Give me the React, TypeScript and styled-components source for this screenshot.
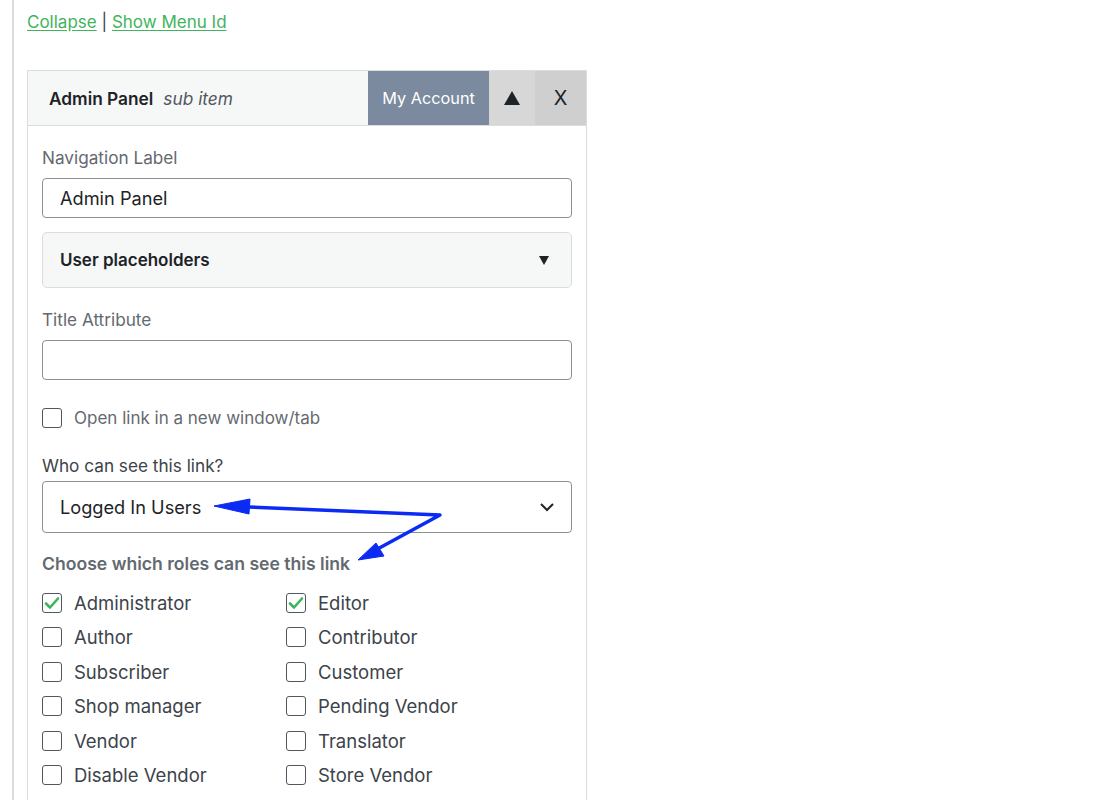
import React from "react";
import styled, { createGlobalStyle } from "styled-components";

const GlobalStyle = createGlobalStyle`
  html, body { margin: 0; padding: 0; background: #fff; }
  body {
    font-family: Inter, "Noto Sans", "Liberation Sans", sans-serif;
    color: #1d2327;
  }
  * { box-sizing: border-box; }
`;

const Page = styled.div`
  margin-left: 12px;
  border-left: 2px solid #dcdcde;
  padding-left: 13px;
  min-height: 800px;
  overflow: hidden;
`;

const LinkBar = styled.div`
  padding-top: 11px;
  height: 70px;
  font-size: 17px;
  color: #3c434a;
  line-height: 22px;
`;

const TextLink = styled.a`
  color: #3fb45c;
  text-decoration: underline;
  text-underline-offset: 2px;
  cursor: pointer;
`;

const Panel = styled.div`
  width: 560px;
  border: 1px solid #dcdcde;
  border-bottom: none;
  min-height: 740px;
  position: relative;
`;

const Header = styled.div`
  display: flex;
  height: 55px;
  background: #f6f7f7;
  border-bottom: 1px solid #dcdcde;
`;

const HeaderTitle = styled.div`
  flex: 1;
  display: flex;
  align-items: center;
  padding-left: 21px;
  gap: 10px;
  font-size: 17.3px;
`;

const TitleStrong = styled.span`
  font-weight: 600;
  color: #1d2327;
`;

const TitleNote = styled.span`
  font-style: italic;
  color: #50575e;
`;

const HeaderButton = styled.div<{ $w: number; $bg: string; $fg: string }>`
  width: ${(p) => p.$w}px;
  background: ${(p) => p.$bg};
  color: ${(p) => p.$fg};
  display: flex;
  align-items: center;
  justify-content: center;
  font-size: 16.3px;
`;

const Body = styled.div`
  padding: 22px 14px 0 14px;
  display: flex;
  flex-direction: column;
`;

const FieldLabel = styled.div<{ $dark?: boolean; $bold?: boolean }>`
  font-size: ${(p) => (p.$bold ? 17.6 : 17.2)}px;
  line-height: 20px;
  color: ${(p) => (p.$dark ? "#3c434a" : "#646970")};
  font-weight: ${(p) => (p.$bold ? 600 : 400)};
`;

const TextInput = styled.div<{ $h?: number; $gap?: number }>`
  margin-top: ${(p) => p.$gap ?? 10}px;
  width: 530px;
  height: ${(p) => p.$h ?? 40}px;
  border: 1px solid #8c8f94;
  border-radius: 4px;
  background: #fff;
  display: flex;
  align-items: center;
  justify-content: space-between;
  padding: 0 16px 0 17px;
  font-size: 18.2px;
  color: #1d2327;
`;

const Toggle = styled.div`
  margin-top: 14px;
  width: 530px;
  height: 56px;
  background: #f6f7f7;
  border: 1px solid #dcdcde;
  border-radius: 5px;
  display: flex;
  align-items: center;
  justify-content: space-between;
  padding: 0 22px 0 17px;
  font-size: 17px;
  font-weight: 600;
  color: #1d2327;
`;

const Tri = styled.span<{ $up?: boolean; $size: number }>`
  width: 0;
  height: 0;
  border-left: ${(p) => p.$size * 0.6}px solid transparent;
  border-right: ${(p) => p.$size * 0.6}px solid transparent;
  ${(p) =>
    p.$up
      ? `border-bottom: ${p.$size}px solid #1d2327;`
      : `border-top: ${p.$size}px solid #1d2327;`}
`;

const Spacer = styled.div<{ $h: number }>`
  height: ${(p) => p.$h}px;
  flex: none;
`;

const CheckRow = styled.label<{ $dark?: boolean; $size?: number }>`
  display: flex;
  align-items: center;
  gap: 12px;
  height: 22px;
  font-size: ${(p) => p.$size ?? 17}px;
  color: ${(p) => (p.$dark ? "#3c434a" : "#646970")};
`;

const Box = styled.span`
  width: 20px;
  height: 20px;
  border: 1.5px solid #50575e;
  border-radius: 3px;
  background: #fff;
  display: flex;
  align-items: center;
  justify-content: center;
  flex: none;
`;

const RoleGrid = styled.div`
  margin-top: 18px;
  display: grid;
  grid-template-columns: 244px 1fr;
  row-gap: 12.4px;
`;

const Overlay = styled.svg`
  position: absolute;
  left: -28px;
  top: -71px;
  pointer-events: none;
`;

function Check({ checked }: { checked?: boolean }) {
  return (
    <Box>
      {checked && (
        <svg width="16" height="14" viewBox="0 0 16 14">
          <path
            d="M2 7.5 L6 11.5 L14 2.5"
            fill="none"
            stroke="#3fb45c"
            strokeWidth="2.6"
            strokeLinecap="round"
            strokeLinejoin="round"
          />
        </svg>
      )}
    </Box>
  );
}

const roles: [string, boolean][] = [
  ["Administrator", true],
  ["Editor", true],
  ["Author", false],
  ["Contributor", false],
  ["Subscriber", false],
  ["Customer", false],
  ["Shop manager", false],
  ["Pending Vendor", false],
  ["Vendor", false],
  ["Translator", false],
  ["Disable Vendor", false],
  ["Store Vendor", false],
];

export default function App() {
  return (
    <>
      <GlobalStyle />
      <Page>
        <LinkBar>
          <TextLink>Collapse</TextLink> | <TextLink>Show Menu Id</TextLink>
        </LinkBar>
        <Panel>
          <Header>
            <HeaderTitle>
              <TitleStrong>Admin Panel</TitleStrong>
              <TitleNote>sub item</TitleNote>
            </HeaderTitle>
            <HeaderButton $w={121} $bg="#7b8a9e" $fg="#fff">
              My Account
            </HeaderButton>
            <HeaderButton $w={46} $bg="#d7d7d7" $fg="#1d2327">
              <Tri $up $size={14} />
            </HeaderButton>
            <HeaderButton $w={51} $bg="#cfcfd0" $fg="#1d2327">
              <span style={{ fontSize: 20 }}>X</span>
            </HeaderButton>
          </Header>
          <Body>
            <FieldLabel>Navigation Label</FieldLabel>
            <TextInput>Admin Panel</TextInput>
            <Toggle>
              User placeholders
              <Tri $size={9} />
            </Toggle>
            <Spacer $h={22} />
            <FieldLabel>Title Attribute</FieldLabel>
            <TextInput />
            <Spacer $h={27} />
            <CheckRow>
              <Check />
              Open link in a new window/tab
            </CheckRow>
            <Spacer $h={27} />
            <FieldLabel $dark>Who can see this link?</FieldLabel>
            <TextInput $h={52} $gap={5}>
              Logged In Users
              <svg width="16" height="10" viewBox="0 0 16 10">
                <path
                  d="M2 2 L8 8 L14 2"
                  fill="none"
                  stroke="#1d2327"
                  strokeWidth="2"
                />
              </svg>
            </TextInput>
            <Spacer $h={21} />
            <FieldLabel $bold>Choose which roles can see this link</FieldLabel>
            <RoleGrid>
              {roles.map(([name, on]) => (
                <CheckRow key={name} $dark $size={18.5}>
                  <Check checked={on} />
                  {name}
                </CheckRow>
              ))}
            </RoleGrid>
          </Body>
          <Overlay width="1100" height="800" viewBox="0 0 1100 800">
            <g fill="#0b2bf5" stroke="#0b2bf5">
              <path d="M248 507 L440 515 L372 552" fill="none" strokeWidth="3.5" strokeLinejoin="round" />
              <path d="M214 506 L250 499 L249 514 Z" strokeWidth="1" />
              <path d="M358 560 L376 543 L384 556 Z" strokeWidth="1" />
            </g>
          </Overlay>
        </Panel>
      </Page>
    </>
  );
}
